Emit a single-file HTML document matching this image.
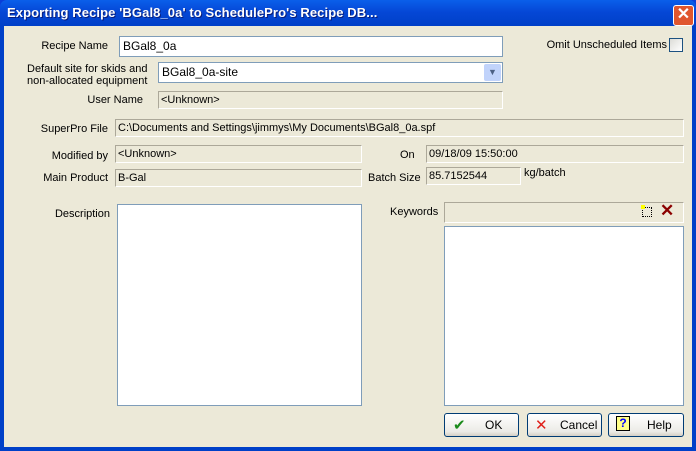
<!DOCTYPE html>
<html><head><style>
*{box-sizing:border-box;margin:0;padding:0}
body{width:696px;height:451px;overflow:hidden;font-family:"Liberation Sans",sans-serif;font-size:11px;color:#000;background:#0A3FD8;position:relative}
.win{position:absolute;left:0;top:0;width:696px;height:451px;background:linear-gradient(#0A5FEA,#0547D6 12px,#0040C8 26px);border-radius:7px 7px 0 0}
.client{position:absolute;left:4px;top:26px;width:688px;height:421px;background:#ECE9D8}
.title{position:absolute;left:7px;top:5px;color:#fff;font-weight:bold;font-size:13px;text-shadow:1px 1px #0a1e7a;letter-spacing:0.1px}
.close{position:absolute;left:673px;top:5px;width:21px;height:21px;background:#E0562E;border:1px solid #fff;border-radius:3px;color:#fff;font-weight:bold;font-size:16px;text-align:center;line-height:18px}
.a{position:absolute;white-space:nowrap}
.r{position:absolute;white-space:nowrap;text-align:right}
.in{position:absolute;background:#fff;border:1px solid #7F9DB9;padding:2px 3px;font-size:12px}
.ro{position:absolute;background:#ECE9D8;border:1px solid;border-color:#ACA899 #fff #fff #ACA899;padding:2px 2px;font-size:11px;white-space:nowrap;overflow:hidden}
.btn{position:absolute;height:24px;border:1px solid #003C74;border-radius:3px;background:linear-gradient(#fff,#ECEBE6 80%,#D6D0C5);font-size:12px}
</style></head><body>
<div class="win">
<div class="title">Exporting Recipe 'BGal8_0a' to SchedulePro's Recipe DB...</div>
<div class="close">✕</div>
<div class="client"></div>
</div>
<div class="r" style="right:588px;top:40px">Recipe Name</div>
<div class="in" style="left:119px;top:36px;width:384px;height:21px">BGal8_0a</div>
<div class="r" style="right:29px;top:39px">Omit Unscheduled Items</div>
<div class="a" style="left:669px;top:38px;width:14px;height:14px;border:1px solid #1C5180;background:linear-gradient(135deg,#DCDCD7,#fff)"></div>
<div class="a" style="left:27px;top:63px;line-height:12px">Default site for skids and<br>non-allocated equipment</div>
<div class="in" style="left:158px;top:62px;width:345px;height:21px">BGal8_0a-site</div>
<div class="a" style="left:484px;top:64px;width:17px;height:17px;background:#C1D3FB;border-radius:2px;color:#4D6185;font-size:9px;text-align:center;line-height:17px">&#9660;</div>
<div class="r" style="right:553px;top:94px">User Name</div>
<div class="ro" style="left:158px;top:91px;width:345px;height:18px">&lt;Unknown&gt;</div>
<div class="r" style="right:588px;top:123px">SuperPro File</div>
<div class="ro" style="left:115px;top:119px;width:569px;height:18px">C:\Documents and Settings\jimmys\My Documents\BGal8_0a.spf</div>
<div class="r" style="right:588px;top:150px">Modified by</div>
<div class="ro" style="left:115px;top:145px;width:247px;height:18px">&lt;Unknown&gt;</div>
<div class="a" style="left:400px;top:149px">On</div>
<div class="ro" style="left:426px;top:145px;width:258px;height:18px">09/18/09 15:50:00</div>
<div class="r" style="right:588px;top:172px">Main Product</div>
<div class="ro" style="left:115px;top:169px;width:247px;height:18px">B-Gal</div>
<div class="a" style="left:368px;top:172px">Batch Size</div>
<div class="ro" style="left:426px;top:167px;width:95px;height:18px">85.7152544</div>
<div class="a" style="left:524px;top:167px">kg/batch</div>
<div class="r" style="right:586px;top:208px">Description</div>
<div class="in" style="left:117px;top:204px;width:245px;height:202px"></div>
<div class="a" style="left:390px;top:206px">Keywords</div>
<div class="ro" style="left:444px;top:202px;width:240px;height:21px"></div>
<div class="a" style="left:642px;top:207px;width:10px;height:10px;border:1px dotted #000"></div>
<div class="a" style="left:641px;top:205px;width:4px;height:4px;background:#ff0"></div>
<div class="a" style="left:660px;top:201px;color:#8B0000;font-size:17px;font-weight:bold">✕</div>
<div class="in" style="left:444px;top:226px;width:240px;height:180px"></div>
<div class="btn" style="left:444px;top:413px;width:75px"><span class="a" style="left:8px;top:2px;color:#1a8a1a;font-size:15px">✔</span><span class="a" style="left:40px;top:4px">OK</span></div>
<div class="btn" style="left:527px;top:413px;width:75px"><span class="a" style="left:7px;top:2px;color:#e0201a;font-size:15px">✕</span><span class="a" style="left:32px;top:4px">Cancel</span></div>
<div class="btn" style="left:608px;top:413px;width:76px"><span class="a" style="left:7px;top:2px;width:14px;height:15px;background:#ff8;border:1px solid #000;color:#00f;font-weight:bold;text-align:center;line-height:13px">?</span><span class="a" style="left:38px;top:4px">Help</span></div>
</body></html>
